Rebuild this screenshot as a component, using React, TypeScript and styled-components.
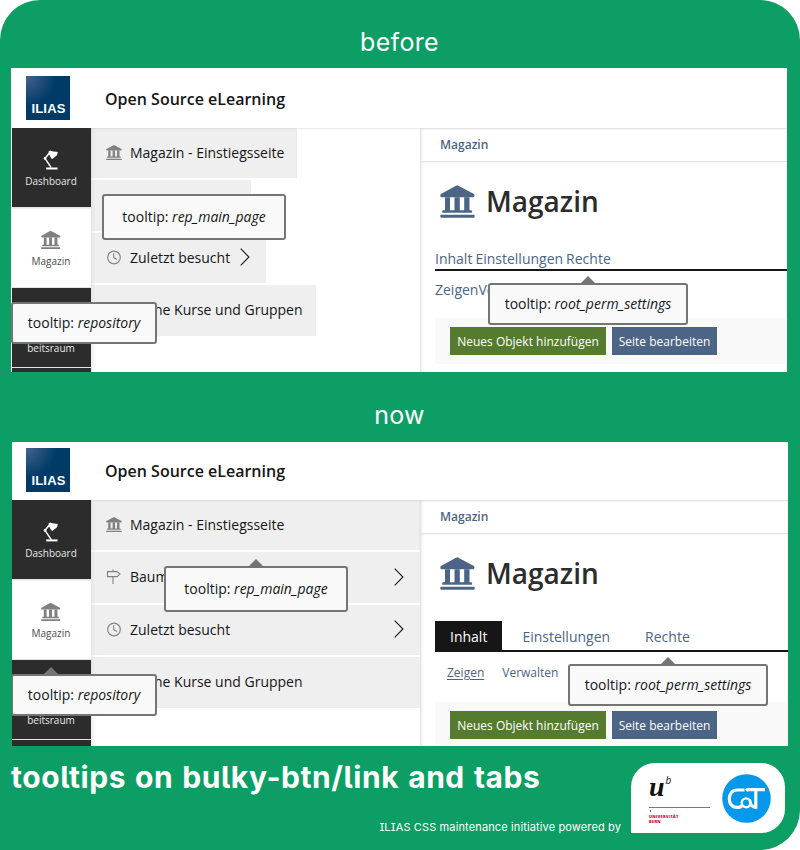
import React from "react";
import styled, { createGlobalStyle, css } from "styled-components";

const green = "#0c9e64";
const blue = "#4c6586";
const dark = "#2c2c2c";

const GlobalStyle = createGlobalStyle`
  * { box-sizing: border-box; }
  body { margin: 0; background: #fff; }
`;

const Poster = styled.main`
  width: 800px;
  height: 850px;
  display: flex;
  flex-direction: column;
  overflow: hidden;
  background: ${green};
  border-radius: 40px 40px 40px 0;
  font-family: "Open Sans", sans-serif;
  color: #161616;
`;

const Caption = styled.h2<{ $height: number; $top: number }>`
  margin: 0;
  height: ${(p) => p.$height}px;
  padding-top: ${(p) => p.$top}px;
  text-align: center;
  color: #fff;
  font: 400 25px/32px Inter, sans-serif;
  letter-spacing: 0.3px;
  text-indent: -1px;
`;

const Screen = styled.section<{ $left: number; $inset: number }>`
  position: relative;
  width: 776px;
  height: 304px;
  flex: none;
  margin-left: ${(p) => p.$left}px;
  padding-left: ${(p) => p.$inset}px;
  display: flex;
  flex-direction: column;
  background: #fff;
  overflow: hidden;
`;

const Header = styled.header<{ $height: number }>`
  height: ${(p) => p.$height}px;
  flex: none;
  display: flex;
  align-items: flex-end;
  padding: 0 0 8px 14px;
  gap: 35px;
`;

const IliasLogo = styled.div`
  width: 44px;
  height: 44px;
  display: flex;
  align-items: flex-end;
  justify-content: center;
  padding: 0 0 5px 1px;
  background: radial-gradient(circle at 0 0, #47628b 0, #003b68 30px);
  color: #fff;
  font: 700 13px/13px "Liberation Sans", sans-serif;
  letter-spacing: 0.2px;
`;

const SiteName = styled.div`
  font-size: 16px;
  font-weight: 600;
  line-height: 46px;
  height: 44px;
`;

const Body = styled.div`
  flex: 1;
  min-height: 0;
  display: flex;
`;

const MainBar = styled.nav`
  width: 79px;
  flex: none;
  display: flex;
  flex-direction: column;
  gap: 1px;
  background: #e4e4e4;
`;

const BarButton = styled.div<{ $active?: boolean }>`
  height: 79px;
  flex: none;
  display: flex;
  flex-direction: column;
  align-items: center;
  padding: 22px 1px 0 0;
  gap: 4px;
  font-size: 10px;
  line-height: 14px;
  background: ${(p) => (p.$active ? "#fff" : dark)};
  color: ${(p) => (p.$active ? "#4c4c4c" : "#e8e8e8")};
  svg { height: 20px; flex: none; }
  ${(p) => p.$active && css`box-shadow: inset 0 1px 1px #0001;`}
`;

const BarSpacer = styled.span`
  height: 9px;
`;

const Slate = styled.div`
  width: 329px;
  flex: none;
  display: flex;
  flex-direction: column;
  align-items: flex-start;
  gap: 2px;
  box-shadow: inset 4px 0 4px -2px #00000014, inset 0 1px 1px #00000014;
`;

const BulkyRow = styled.div<{ $width: number; $height: number }>`
  width: ${(p) => p.$width}px;
  height: ${(p) => p.$height}px;
  display: flex;
  align-items: center;
  padding: 0 12px 2px 15px;
  background: #efefef;
  font-size: 14px;
  white-space: nowrap;
  box-shadow: inset 4px 0 4px -3px #00000012;
  &:first-child { box-shadow: inset 4px 0 4px -3px #00000012, inset 0 1px 2px #00000014; }
`;

const RowIcon = styled.span`
  width: 24px;
  flex: none;
  display: flex;
  padding-top: 1px;
`;

const RowLabel = styled.span`
  flex: 1;
`;

const RowArrow = styled.span`
  display: flex;
  padding: 0 4px 0 0;
`;

const Content = styled.div`
  flex: 1;
  min-width: 0;
  display: flex;
  flex-direction: column;
  box-shadow: inset 0 1px 2px #0000001c, inset 2px 0 3px #00000014;
`;

const Breadcrumb = styled.div`
  height: 34px;
  flex: none;
  padding-left: 20px;
  border-bottom: 1px solid #e6e6e6;
  box-shadow: 0 1px 2px #0000000a;
  font-size: 12px;
  font-weight: 600;
  line-height: 34px;
  color: ${blue};
`;

const Page = styled.div`
  padding-left: 15px;
  display: flex;
  flex-direction: column;
`;

const PageTitle = styled.h1`
  margin: 0;
  height: 87px;
  display: flex;
  align-items: flex-start;
  gap: 11px;
  padding: 23px 0 0 5px;
  font-size: 28px;
  font-weight: 600;
  line-height: 32px;
  color: #2c2c2c;
`;

const Tabs = styled.div<{ $plain?: boolean }>`
  height: ${(p) => (p.$plain ? 22 : 31)}px;
  display: flex;
  gap: ${(p) => (p.$plain ? 3 : 5)}px;
  border-bottom: 2px solid #161616;
  color: ${blue};
  font-size: 14px;
  line-height: ${(p) => (p.$plain ? 19 : 31)}px;
`;

const Tab = styled.span<{ $active?: boolean }>`
  padding: 0 15px;
  ${(p) => p.$active && css`background: #161616; color: #fff;`}
`;

const SubTabs = styled.div<{ $plain?: boolean }>`
  height: ${(p) => (p.$plain ? 47 : 50)}px;
  display: flex;
  gap: ${(p) => (p.$plain ? 0 : 18)}px;
  padding-left: ${(p) => (p.$plain ? 0 : 12)}px;
  color: ${blue};
  font-size: ${(p) => (p.$plain ? 14 : 12)}px;
  line-height: ${(p) => (p.$plain ? 37 : 41)}px;
`;

const SubTab = styled.span<{ $active?: boolean }>`
  text-decoration: ${(p) => (p.$active ? "underline" : "none")};
  text-underline-offset: 2px;
`;

const Toolbar = styled.div`
  height: 46px;
  display: flex;
  align-items: flex-start;
  gap: 6px;
  padding: 9px 15px;
  background: #f9f9f9;
`;

const ActionButton = styled.span<{ $color: string; $width: number }>`
  width: ${(p) => p.$width}px;
  height: 28px;
  text-align: center;
  white-space: nowrap;
  background: ${(p) => p.$color};
  color: #fff;
  font-size: 12px;
  line-height: 30px;
`;

const TooltipBox = styled.div<{ $x: number; $y: number; $w: number; $h: number; $arrow?: number }>`
  position: absolute;
  left: ${(p) => p.$x}px;
  top: ${(p) => p.$y}px;
  width: ${(p) => p.$w}px;
  height: ${(p) => p.$h}px;
  border: 2px solid #757575;
  border-radius: 3px;
  background: #f9f9f9;
  text-align: center;
  white-space: nowrap;
  font-size: 14px;
  line-height: ${(p) => p.$h - 5}px;
  ${(p) =>
    p.$arrow !== undefined &&
    css`
      &::before {
        content: "";
        position: absolute;
        left: ${p.$arrow - 9}px;
        top: -9px;
        border: 7px solid transparent;
        border-top: 0;
        border-bottom-color: #757575;
      }
    `}
`;

const Footer = styled.footer`
  flex: 1;
  display: flex;
  justify-content: space-between;
  padding: 17px 15px 0 11px;
`;

const FooterText = styled.div`
  width: 610px;
  display: flex;
  flex-direction: column;
  color: #fff;
  font-family: Inter, sans-serif;
  font-feature-settings: "cv05", "cv08";
  white-space: nowrap;
`;

const Headline = styled.div`
  height: 55px;
  font-size: 30px;
  font-weight: 700;
  line-height: 28px;
  letter-spacing: 0.55px;
  word-spacing: 1.4px;
`;

const PoweredBy = styled.div`
  align-self: flex-end;
  font-size: 11px;
  line-height: 18px;
  letter-spacing: 0.13px;
`;

const LogoCard = styled.div`
  width: 154px;
  height: 70px;
  flex: none;
  display: flex;
  align-items: flex-start;
  gap: 12px;
  padding: 11px 14px 0 18px;
  border-radius: 24px 24px 24px 0;
  background: #fff;
`;

const UniLogo = styled.div`
  width: 61px;
  display: flex;
  flex-direction: column;
`;

const UniMark = styled.div`
  height: 34px;
  display: flex;
  align-items: flex-start;
  border-bottom: 1px solid #777;
  color: #111;
`;

const UniU = styled.span`
  font: italic 700 28px/25px "Liberation Serif", serif;
`;

const UniB = styled.span`
  margin-left: 1px;
  font: italic 400 10px/12px "Open Sans", sans-serif;
`;

const UniTick = styled.span`
  width: 1px;
  height: 2px;
  margin: 2px 0 2px 1px;
  background: #666;
`;

const UniName = styled.div`
  color: #e4003c;
  font: 800 4px/5px "Open Sans", sans-serif;
  letter-spacing: 0.25px;
`;

const BankIcon = ({ width, color }: { width: number; color: string }) => (
  <svg width={width} height={width * 0.95} viewBox="0 0 35 33" fill={color}>
    <path d="M17.4 0 34 8.8c.7.5.6 3.2-.5 3.2H1.2C.2 12 0 9.3.9 8.8L15.5.8Q17 0 17.4 0Z" />
    <path d="M5 12h5v13h4.5V12h5.3v13h4.4V12h5.3v13h1.8c1 0 1.2 2.7.4 2.7H2.8c-1 0-.9-2.7.2-2.7h2Z" />
    <rect x=".3" y="29.7" width="34.4" height="2.8" rx=".8" />
  </svg>
);

const LampIcon = () => (
  <svg width="16" height="20" viewBox="0 0 16 20" fill="none" stroke="#fff">
    <path d="M6.2 3.2 2 8.4 8.2 17.7" strokeWidth="1.5" />
    <circle cx="2" cy="8.4" r="1.3" fill="#fff" stroke="none" />
    <path d="M5.5 1.5 7.3.4 9 1.3l5.8.6L14 5.2 9.3 9 8 8.1 5.8 4Z" fill="#fff" stroke="none" />
    <path d="M3.2 18.4h11.3" strokeWidth="2" />
  </svg>
);

const SignIcon = () => (
  <svg width="15" height="16" viewBox="0 0 15 16" fill="none" stroke="#808080" strokeWidth="1.1">
    <path d="M1.5 2.6h9.5l3 2.5-3 2.5H1.5ZM7 .5v2.1M7 7.6V15" />
  </svg>
);

const ClockIcon = () => (
  <svg width="16" height="15" viewBox="0 0 16 15" fill="none" stroke="#858585">
    <circle cx="8" cy="7.5" r="6.3" strokeWidth="1.2" />
    <path d="M7.7 3.2v4.4l3.3 1.9" strokeWidth="1.1" />
  </svg>
);

const Chevron = () => (
  <svg width="10" height="18" viewBox="0 0 10 18" fill="none" stroke="#222" strokeWidth="1.2">
    <path d="m.7.7 8.2 8.3-8.2 8.3" />
  </svg>
);

const CatLogo = () => (
  <svg width="49" height="49" viewBox="0 0 49 49" fill="none" stroke="#fff" strokeWidth="3.2">
    <circle cx="24.5" cy="24.5" r="24.3" fill="#0699eb" stroke="none" />
    <path d="M22.5 16H15c-5 0-7.7 4.2-7.7 8.7s2.7 8.7 7.7 8.7h1.5c2 0 3-.9 3.8-2.6" />
    <path d="M24 16.6c.8-.7 1.6-.9 3-.9H43" />
    <path d="M33.8 16v18.8" />
    <circle cx="24.2" cy="28.8" r="4.4" strokeWidth="2.4" />
    <path d="M27.6 25.5c.6 5.5 2.5 7.9 6.4 7.9" strokeWidth="2.6" />
  </svg>
);

type TipProps = { name: string; x: number; y: number; w: number; h: number; arrow?: number };

const Tooltip = ({ name, x, y, w, h, arrow }: TipProps) => (
  <TooltipBox $x={x} $y={y} $w={w} $h={h} $arrow={arrow}>
    tooltip: <em>{name}</em>
  </TooltipBox>
);

type Row = { label: string; icon: React.ReactNode; height: number; narrow: number; chevron?: boolean };

const rows: Row[] = [
  { label: "Magazin - Einstiegsseite", icon: <BankIcon width={16} color="#808080" />, height: 50, narrow: 206 },
  { label: "Baumansicht", icon: <SignIcon />, height: 51, narrow: 160, chevron: true },
  { label: "Zuletzt besucht", icon: <ClockIcon />, height: 50, narrow: 175, chevron: true },
  { label: "Meine Kurse und Gruppen", icon: null, height: 51, narrow: 225 },
];

const Application = ({ before, tips }: { before: boolean; tips: TipProps[] }) => (
  <Screen $left={before ? 11 : 12} $inset={before ? 1 : 0}>
    <Header $height={before ? 60 : 58}>
      <IliasLogo>ILIAS</IliasLogo>
      <SiteName>Open Source eLearning</SiteName>
    </Header>
    <Body>
      <MainBar>
        <BarButton>
          <LampIcon />
          <span>Dashboard</span>
        </BarButton>
        <BarButton $active>
          <BankIcon width={19.5} color="#808080" />
          <span>Magazin</span>
        </BarButton>
        <BarButton>
          <BarSpacer />
          <span>Pers. Ar-</span>
          <span>beitsraum</span>
        </BarButton>
        <BarButton />
      </MainBar>
      <Slate>
        {rows.map((row) => (
          <BulkyRow key={row.label} $width={before ? row.narrow : 329} $height={row.height}>
            <RowIcon>{row.icon}</RowIcon>
            <RowLabel>{row.label}</RowLabel>
            {row.chevron && (
              <RowArrow>
                <Chevron />
              </RowArrow>
            )}
          </BulkyRow>
        ))}
      </Slate>
      <Content>
        <Breadcrumb>Magazin</Breadcrumb>
        <Page>
          <PageTitle>
            <BankIcon width={35} color={blue} />
            Magazin
          </PageTitle>
          {before ? (
            <>
              <Tabs $plain>
                <span>Inhalt</span>
                <span>Einstellungen</span>
                <span>Rechte</span>
              </Tabs>
              <SubTabs $plain>
                <SubTab>Zeigen</SubTab>
                <SubTab>Verwalten</SubTab>
              </SubTabs>
            </>
          ) : (
            <>
              <Tabs>
                <Tab $active>Inhalt</Tab>
                <Tab>Einstellungen</Tab>
                <Tab>Rechte</Tab>
              </Tabs>
              <SubTabs>
                <SubTab $active>Zeigen</SubTab>
                <SubTab>Verwalten</SubTab>
              </SubTabs>
            </>
          )}
          <Toolbar>
            <ActionButton $color="#557b2e" $width={156}>Neues Objekt hinzufügen</ActionButton>
            <ActionButton $color={blue} $width={105}>Seite bearbeiten</ActionButton>
          </Toolbar>
        </Page>
      </Content>
    </Body>
    {tips.map((tip) => (
      <Tooltip key={tip.name} {...tip} />
    ))}
  </Screen>
);

const tipsBefore: TipProps[] = [
  { name: "rep_main_page", x: 91, y: 126, w: 184, h: 46 },
  { name: "repository", x: 0, y: 234, w: 146, h: 42 },
  { name: "root_perm_settings", x: 477, y: 215, w: 200, h: 42, arrow: 100 },
];

const tipsNow: TipProps[] = [
  { name: "rep_main_page", x: 152, y: 124, w: 184, h: 46, arrow: 92 },
  { name: "repository", x: -1, y: 232, w: 146, h: 42, arrow: 40 },
  { name: "root_perm_settings", x: 556, y: 222, w: 200, h: 42, arrow: 100 },
];

export default function App() {
  return (
    <>
      <GlobalStyle />
      <Poster>
        <Caption $height={68} $top={26}>before</Caption>
        <Application before tips={tipsBefore} />
        <Caption $height={70} $top={27}>now</Caption>
        <Application before={false} tips={tipsNow} />
        <Footer>
          <FooterText>
            <Headline>tooltips on bulky-btn/link and tabs</Headline>
            <PoweredBy>ILIAS CSS maintenance initiative powered by</PoweredBy>
          </FooterText>
          <LogoCard>
            <UniLogo>
              <UniMark>
                <UniU>u</UniU>
                <UniB>b</UniB>
              </UniMark>
              <UniTick />
              <UniName>UNIVERSITÄT<br />BERN</UniName>
            </UniLogo>
            <CatLogo />
          </LogoCard>
        </Footer>
      </Poster>
    </>
  );
}
